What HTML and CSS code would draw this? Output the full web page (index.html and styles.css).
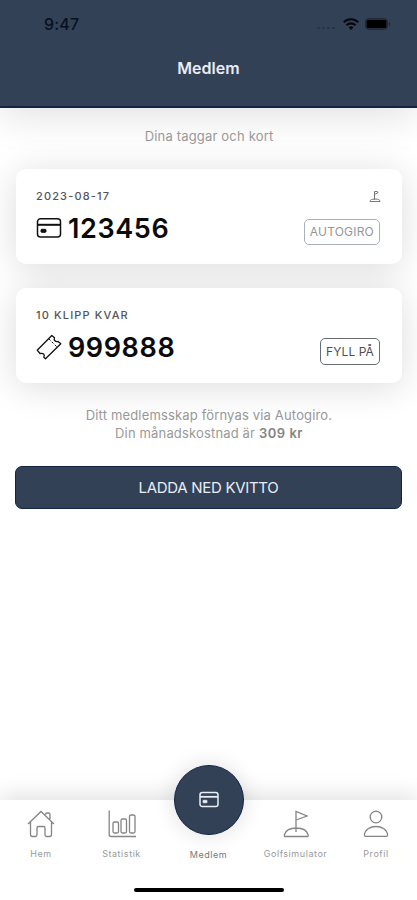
FILE: index.html
```html
<!DOCTYPE html>
<html lang="sv">
<head>
    <meta charset="UTF-8">
    <meta name="viewport" content="width=device-width, initial-scale=1.0">
    <title>Medlem</title>
    <link rel="stylesheet" href="styles.css">
</head>
<body>
    <!-- Header -->
    <header class="header">
        <div class="status-bar">
            <span class="time">9:47</span>
            <div class="status-icons">
                <svg class="dots" width="20" height="4" viewBox="0 0 20 4"><path d="M1 2h3M6 2h3M11 2h3M16 2h3" stroke="#243146" stroke-width="1.4"/></svg>
                <svg width="16" height="12" viewBox="0 0 16 12" fill="none" stroke="#05080d" stroke-width="2.1">
                    <path d="M.8 4.2a10.3 10.3 0 0 1 14.4 0M3.5 7.2a6.4 6.4 0 0 1 9 0"/>
                    <path d="M8 12 5.6 9.5a3.5 3.5 0 0 1 4.8 0z" fill="#05080d" stroke="none"/>
                </svg>
                <svg width="26" height="12" viewBox="0 0 26 12">
                    <rect x=".5" y=".5" width="22" height="11" rx="3" fill="none" stroke="#1d2938"/>
                    <rect x="1.5" y="1.8" width="20" height="8.4" rx="1.5" fill="#000"/>
                    <path d="M24 4v4q1.3-.7 1.3-2T24 4z" fill="#1d2938"/>
                </svg>
            </div>
        </div>
        <h1>Medlem</h1>
    </header>

    <!-- Tags and cards -->
    <main class="content">
        <p class="intro">Dina taggar och kort</p>

        <section class="card">
            <div class="card-top">
                <span class="card-label">2023-08-17</span>
                <svg class="flag" width="12" height="13" viewBox="0 0 12 13" fill="none" stroke="#777" stroke-width="1">
                    <path d="M5.5 10V1.5H8q1 .2 1 1.2L5.5 4.5M1 11.5Q1 9 6 9t5 2.5z"/>
                </svg>
            </div>
            <div class="card-bottom">
                <svg class="card-icon" width="26" height="22" viewBox="0 0 26 22" fill="none" stroke="#111" stroke-width="1.5">
                    <rect x="1.5" y="1.8" width="23" height="18.2" rx="3"/>
                    <path d="M1.5 7.8h23" stroke-width="2"/>
                    <rect x="5" y="12.3" width="5" height="3" rx=".8" fill="#111" stroke-width="1"/>
                </svg>
                <span class="number">123456</span>
                <button class="card-button muted">AUTOGIRO</button>
            </div>
        </section>

        <section class="card second">
            <div class="card-top">
                <span class="card-label">10 KLIPP KVAR</span>
            </div>
            <div class="card-bottom">
                <svg class="card-icon" width="26" height="26" viewBox="0 0 26 26" fill="none" stroke="#111" stroke-width="1.3" stroke-linejoin="round">
                    <path d="M1.2 16.2 15.8 1.5l2.7 2.2q-.8 1.9.4 3.1 1.200 1.200 3.200.600l2.700 2.400L9.500 24.800l-1.700-1.500q1-2.100-.2-3.200-1.200-1.100-3.600-.600z"/>
                    <path d="m12.800 4.800 1.700 1.700m1.300 1.300 1.700 1.700m1.300 1.300 1.700 1.700" stroke-width="1"/>
                </svg>
                <span class="number">999888</span>
                <button class="card-button">FYLL PÅ</button>
            </div>
        </section>

        <p class="info">Ditt medlemsskap förnyas via Autogiro.<br>Din månadskostnad är <strong>309 kr</strong></p>
        <button class="receipt-button">LADDA NED KVITTO</button>
    </main>

    <!-- Bottom navigation -->
    <nav class="tab-bar">
        <a class="tab">
            <svg width="28" height="28" viewBox="0 0 28 28">
                <path d="M1 14 14 1.5 27 14M3.5 12v12.5q0 2 2 2h3q1.5 0 1.5-1.5v-7q0-1.5 1.5-1.5h5q1.5 0 1.5 1.5v7q0 1.5 1.5 1.500h3q2 0 2-2V12M18.500 4.500q0-1.500 1.500-1.500h1.500q1.500 0 1.500 1.500V9"/>
            </svg>
            <span>Hem</span>
        </a>
        <a class="tab">
            <svg width="28" height="28" viewBox="0 0 28 28">
                <path d="M1.2.5v24q0 2 2 2H28"/>
                <rect x="5" y="12" width="5.500" height="11" rx="1.5"/>
                <rect x="13" y="9" width="5.500" height="14" rx="1.5"/>
                <rect x="21.500" y="5" width="5.500" height="18" rx="1.5"/>
            </svg>
            <span>Statistik</span>
        </a>
        <a class="tab active">
            <div class="circle">
                <svg width="20" height="18" viewBox="0 0 20 18" fill="none" stroke="#e9eef6" stroke-width="1.5">
                    <rect x="1" y="1.5" width="18" height="14" rx="2.3"/>
                    <path d="M1 5.8h18" stroke-width="1.8"/>
                    <rect x="4" y="9.3" width="4" height="2.5" rx=".6" fill="#e9eef6" stroke-width=".8"/>
                </svg>
            </div>
            <span>Medlem</span>
        </a>
        <a class="tab">
            <svg width="28" height="28" viewBox="0 0 28 28">
                <path d="M14 22V1.500L25 6l-11 4M3 26.500q-1 0-.5-2Q4.500 18 14.300 18t11.700 6.500q.5 2-.5 2z"/>
            </svg>
            <span>Golfsimulator</span>
        </a>
        <a class="tab">
            <svg width="28" height="28" viewBox="0 0 28 28">
                <circle cx="14" cy="7" r="5.8"/>
                <path d="M3.4 26.3q-1-.2-1-1.5C3 19.5 8 16.5 14 16.5s11 3 11.6 8.3q0 1.3-1 1.5z"/>
            </svg>
            <span>Profil</span>
        </a>
        <div class="home-indicator"></div>
    </nav>
</body>
</html>
```
FILE: styles.css
```css
* {
    box-sizing: border-box;
}

body {
    margin: 0;
    height: 900px;
    display: flex;
    flex-direction: column;
    overflow: hidden;
    background-color: #fff;
    font-family: Inter, "Liberation Sans", sans-serif;
}

button {
    font-family: inherit;
    cursor: pointer;
}

/* Header */
.header {
    height: 108px;
    flex-shrink: 0;
    background-color: #334157;
    border-bottom: 2px solid #122344;
    box-shadow: 0 8px 40px rgba(0, 0, 0, 0.12);
}

.status-bar {
    height: 48px;
    padding: 0 26px 0 44px;
    display: flex;
    align-items: center;
    justify-content: space-between;
}

.time {
    font-size: 16px;
    font-weight: 500;
    color: #071020;
    letter-spacing: 0.2px;
}

.status-icons {
    display: flex;
    align-items: center;
    gap: 6px;
}

.dots {
    margin: 8px 1px 0 0;
}

h1 {
    margin: 9px 0 0;
    text-align: center;
    font-size: 16px;
    line-height: 22px;
    font-weight: 600;
    color: #e7edf6;
}

/* Content */
.content {
    flex: 1;
    padding: 19px 15px 0 16px;
}

.intro {
    margin: 0 0 23px;
    text-align: center;
    font-size: 13px;
    line-height: 19px;
    letter-spacing: 0.18px;
    color: #999;
}

.card {
    position: relative;
    height: 95px;
    padding: 19px 21px 0 20px;
    background-color: #fff;
    border-radius: 10px;
    box-shadow: 0 4px 36px rgba(0, 0, 0, 0.14);
}

.card.second {
    margin-top: 24px;
}

.card-top {
    height: 16px;
    display: flex;
    align-items: center;
    justify-content: space-between;
}

.card-label {
    font-size: 11px;
    font-weight: 500;
    letter-spacing: 1.15px;
    color: #555;
}

.card-bottom {
    height: 48px;
    display: flex;
    align-items: center;
}

.card-icon {
    margin-right: 6px;
}

.number {
    flex: 1;
    font-size: 27px;
    font-weight: 600;
    letter-spacing: 0.6px;
    color: #0b0b0b;
}

.card-button {
    height: 27px;
    margin: 8px 1px 0 0;
    padding: 0 5px;
    font-size: 12px;
    letter-spacing: 0.1px;
    color: #4b5058;
    background-color: #fff;
    border: 1px solid #666c73;
    border-radius: 5px;
}

.card-button.muted {
    height: 26px;
    margin-top: 7px;
    letter-spacing: 0.2px;
    color: #92969c;
    border-color: #aab1b9;
}

.info {
    margin: 23px 0 0;
    text-align: center;
    font-size: 13px;
    line-height: 18px;
    letter-spacing: 0.16px;
    color: #999;
}

.info strong {
    font-weight: 600;
    letter-spacing: 0.5px;
    color: #858585;
}

.receipt-button {
    width: 387px;
    height: 43px;
    margin: 24px 0 0 -1px;
    font-size: 15px;
    letter-spacing: -0.3px;
    color: #e7edf6;
    background-color: #334157;
    border: 1px solid #122344;
    border-radius: 7px;
}

/* Bottom navigation */
.tab-bar {
    position: relative;
    height: 100px;
    flex-shrink: 0;
    padding-top: 10px;
    display: grid;
    grid-template-columns: 82px 79px 95px 79px 82px;
    align-items: start;
    background-color: #fff;
    box-shadow: 0 -4px 22px rgba(0, 0, 0, 0.13);
}

.tab {
    display: flex;
    flex-direction: column;
    align-items: center;
    font-size: 9px;
    line-height: 12px;
    letter-spacing: 0.55px;
    color: #999;
}

.tab > svg {
    margin-bottom: 10px;
    fill: none;
    stroke: #858585;
    stroke-width: 1.3;
}

.tab.active {
    margin-top: -45px;
    color: #777;
}

.circle {
    width: 70px;
    height: 70px;
    margin-bottom: 14px;
    display: flex;
    align-items: center;
    justify-content: center;
    background-color: #334157;
    border: 1px solid #122344;
    border-radius: 50%;
    box-shadow: 0 0 22px rgba(0, 0, 0, 0.13);
}

.home-indicator {
    position: absolute;
    left: 134px;
    bottom: 8px;
    width: 150px;
    height: 4px;
    background-color: #000;
    border-radius: 2px;
}
```
